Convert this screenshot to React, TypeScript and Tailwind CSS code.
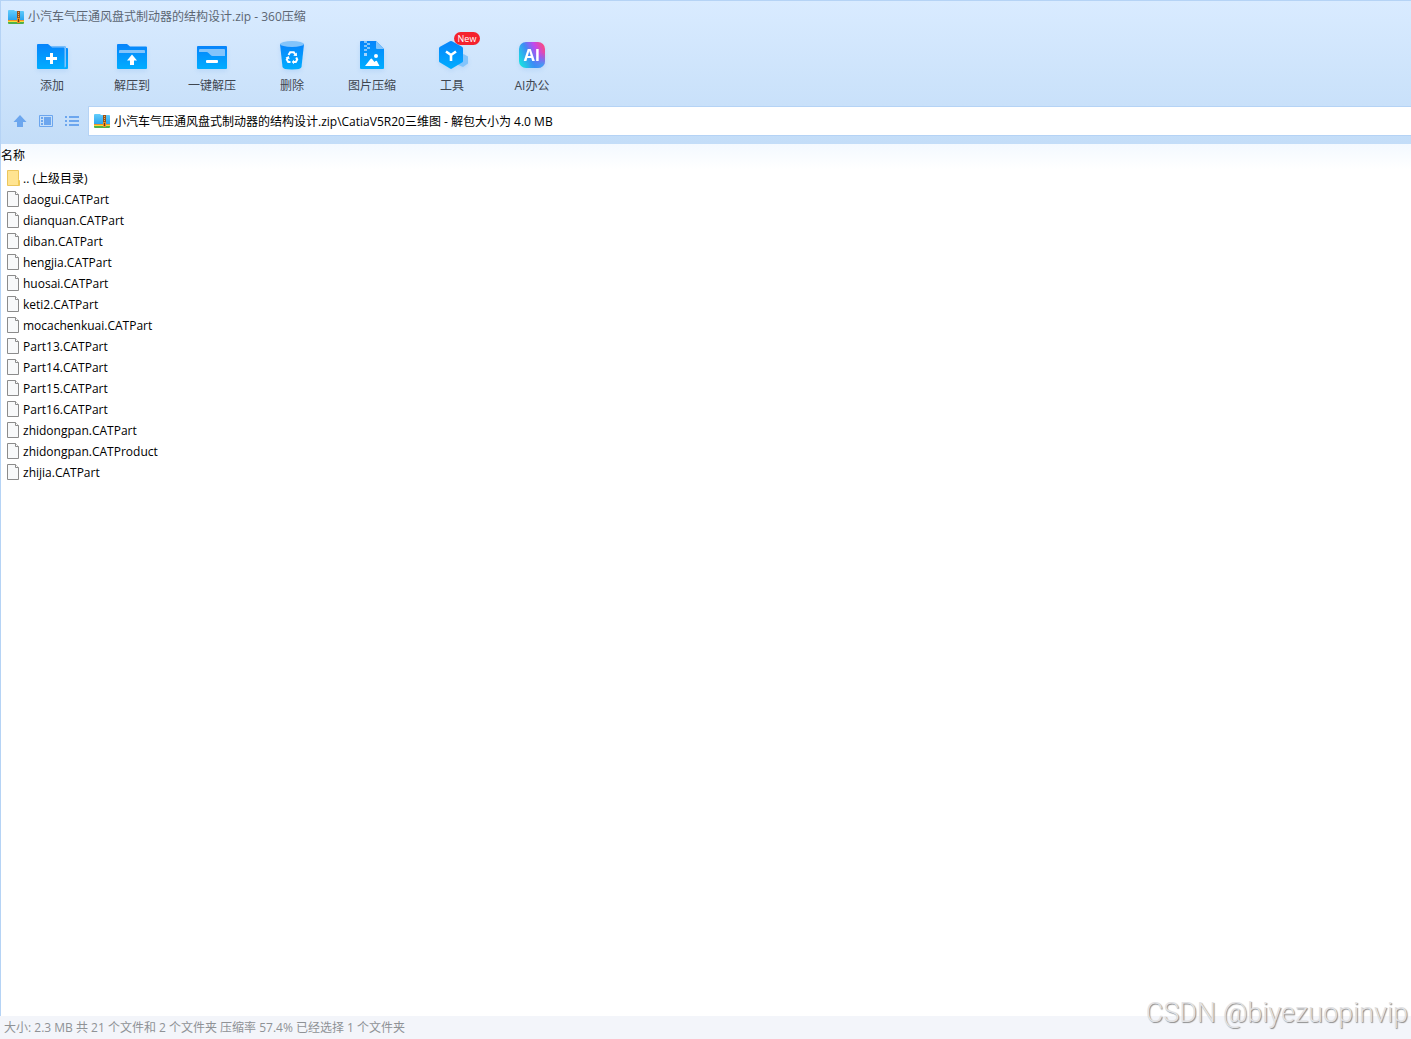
import React, { useState } from 'react';

interface Tool {
    label: string;
    icon: React.ReactNode;
    isNew?: boolean;
}

const ArchiveIcon: React.FC = () => (
    <svg width="16" height="16" viewBox="0 0 16 16" className="shrink-0" aria-hidden="true">
        <defs>
            <linearGradient id="archive" x1="0" y1="0" x2="0" y2="1">
                <stop offset="0" stopColor="#63cdfb" />
                <stop offset="1" stopColor="#2ba4ee" />
            </linearGradient>
        </defs>
        <path d="M0 2Q0 1 1 1h5l1 1h8q1 0 1 1v8H0z" fill="url(#archive)" />
        <path d="M0 11h16v1H0z" fill="#f0902a" />
        <path d="M0 12h16v1H0z" fill="#f7dc3a" />
        <path d="M0 13h16v1q0 1-1 1H1q-1 0-1-1z" fill="#4fb04a" />
        <path d="M9 2h3v12H9z" fill="#94511d" />
        <path d="M10 3h1v1h-1zm0 2h1v1h-1zm0 2h1v1h-1z" fill="#f3b04b" />
        <path d="M9 9h3v5H9z" fill="#e88b20" />
        <path d="M10 10h1v3h-1z" fill="#6e3a12" />
    </svg>
);

const Blue: React.FC<{ id: string }> = ({ id }) => (
    <defs>
        <linearGradient id={id} x1="0" y1="0" x2="0" y2="1">
            <stop offset="0" stopColor="#0784fb" />
            <stop offset="1" stopColor="#00adff" />
        </linearGradient>
    </defs>
);

const svgProps = { width: 40, height: 40, viewBox: '0 0 40 40', 'aria-hidden': true, className: 'drop-shadow-[0_2px_2px_rgba(60,140,230,0.15)]' };

const AddIcon = () => (
    <svg {...svgProps}>
        <Blue id="add" />
        <path d="M5 10q0-1 1-1h10l3 2.500h14q1 0 1 1V13h1q1 0 1 1v19q0 1-1 1H6q-1 0-1-1z" fill="url(#add)" />
        <path d="M19 11.500h13.500q1.500 0 1.500 1.500v18q0 1.500-1.500 1.500v-19q0-1-1-1H20z" fill="#83c4fb" />
        <path d="M18 18h3v4h4v3h-4v4h-3v-4h-4v-3h4z" fill="#fff" />
    </svg>
);

const ExtractIcon = () => (
    <svg {...svgProps}>
        <Blue id="extract" />
        <path d="M5 10q0-1 1-1h9l3 2.500h16q1 0 1 1V33q0 1-1 1H6q-1 0-1-1z" fill="url(#extract)" />
        <path d="M7 18v-2q0-1 1-1h24q1 0 1 1v2z" fill="#83c4fb" />
        <path d="M20 19.500l5 6h-3V30h-4v-4.500h-3z" fill="#fff" />
    </svg>
);

const QuickExtractIcon = () => (
    <svg {...svgProps}>
        <Blue id="quick" />
        <path d="M5 12q0-1 1-1h28q1 0 1 1v21q0 1-1 1H6q-1 0-1-1z" fill="url(#quick)" />
        <path d="M7 15q0-1 1-1h24q1 0 1 1v6H20.500q-1 0-2-1l-2-2q-1-1-2-1H7z" fill="#83c4fb" />
        <rect x="14" y="25" width="12" height="3" rx="1" fill="#fff" />
    </svg>
);

const DeleteIcon = () => (
    <svg {...svgProps}>
        <Blue id="delete" />
        <path d="M8 9h24l-2.500 23q-.3 2.500-9.500 2.500T10.500 32z" fill="url(#delete)" />
        <ellipse cx="20" cy="9" rx="12" ry="3" fill="#83c4fb" />
        <g fill="none" stroke="#fff" strokeWidth="2">
            <path d="M16.500 20l1.700-2.700h3.600l1.400 2.200" />
            <path d="M24.200 22.500l1 2-1.400 2.500h-2.300" />
            <path d="M18.500 27h-2.300l-1.400-2.500 1-1.800" />
        </g>
        <path d="M21.200 20.800l3.800.2-.2-3.600zM22 24.800v4.400L19.700 27zM13.500 22.700l3.200-1.600 1 3.200z" fill="#fff" />
    </svg>
);

const ImageIcon = () => (
    <svg {...svgProps}>
        <Blue id="image" />
        <path d="M8 7q0-1 1-1h15l8 8v19q0 1-1 1H9q-1 0-1-1z" fill="url(#image)" />
        <path d="M24 6l8 8h-7q-1 0-1-1z" fill="#83c4fb" />
        <path d="M12 6h3v2h3v2h-3v2h3v2h-3v2h-3v-2h3v-2h-3v-2h3V8h-3z" fill="#83c4fb" />
        <path d="M12 18h3v3h-3z" fill="#a5d5fd" />
        <circle cx="24" cy="21" r="2" fill="#fff" />
        <path d="M13 31l5.500-7q.8-1 1.600 0l2.400 3 1-1q.7-.7 1.400 0l2.600 5z" fill="#fff" />
    </svg>
);

const ToolsIcon = () => (
    <svg {...svgProps}>
        <Blue id="tools" />
        <path d="M31.500 19l4.500 2.500v7L31 32l-6-2.500z" fill="#83c4fb" />
        <path d="M18 6.300q1-.6 2 0l10 5.500q1 .6 1 1.700v12.500q0 1-1 1.600l-10 6q-1 .6-2 0l-10-6q-1-.6-1-1.600V13.500q0-1.100 1-1.700z" fill="url(#tools)" />
        <path d="M14 16.500l5 3.500 5-3.500M19 20v6" fill="none" stroke="#fff" strokeWidth="2.600" />
    </svg>
);

const AiIcon = () => (
    <svg {...svgProps}>
        <defs>
            <linearGradient id="ai" x1="0" y1=".7" x2="1" y2=".2">
                <stop offset="0" stopColor="#19dce2" />
                <stop offset=".4" stopColor="#3f8bf5" />
                <stop offset=".7" stopColor="#c049ee" />
                <stop offset="1" stopColor="#fb4a7d" />
            </linearGradient>
            <radialGradient id="aiGlow" cx=".95" cy="1" r=".6">
                <stop offset="0" stopColor="#22b8f4" />
                <stop offset="1" stopColor="#3f7cf5" stopOpacity="0" />
            </radialGradient>
        </defs>
        <rect x="7" y="7" width="26" height="26" rx="7" fill="url(#ai)" />
        <rect x="7" y="7" width="26" height="26" rx="7" fill="url(#aiGlow)" />
        <text x="20" y="26" textAnchor="middle" fill="#fff" fontSize="16" fontWeight="700" fontFamily="Open Sans, sans-serif">AI</text>
    </svg>
);

const FolderIcon = () => (
    <svg width="14" height="18" viewBox="0 0 14 18" className="shrink-0" aria-hidden="true">
        <path d="M1.500 1.500h11v9l1 1v5h-12z" fill="#ffe491" stroke="#ecc65c" />
        <path d="M12.500 10.500v6" stroke="#f3cc55" />
    </svg>
);

const FileIcon = () => (
    <svg width="14" height="18" viewBox="0 0 14 18" className="shrink-0" aria-hidden="true">
        <path d="M1.500 1.500h8l3 3v12h-11z" fill="#f8f9fa" stroke="#8b8b8b" />
        <path d="M9.500 1.500v3h3" fill="#fff" stroke="#8b8b8b" />
    </svg>
);

const tools: Tool[] = [
    { label: '添加', icon: <AddIcon /> },
    { label: '解压到', icon: <ExtractIcon /> },
    { label: '一键解压', icon: <QuickExtractIcon /> },
    { label: '删除', icon: <DeleteIcon /> },
    { label: '图片压缩', icon: <ImageIcon /> },
    { label: '工具', icon: <ToolsIcon />, isNew: true },
    { label: 'AI办公', icon: <AiIcon /> },
];

const files = [
    'daogui.CATPart',
    'dianquan.CATPart',
    'diban.CATPart',
    'hengjia.CATPart',
    'huosai.CATPart',
    'keti2.CATPart',
    'mocachenkuai.CATPart',
    'Part13.CATPart',
    'Part14.CATPart',
    'Part15.CATPart',
    'Part16.CATPart',
    'zhidongpan.CATPart',
    'zhidongpan.CATProduct',
    'zhijia.CATPart',
];

const FileRow: React.FC<{ name: string; icon: React.ReactNode }> = ({ name, icon }) => (
    <tr>
        <td className="p-0">
            <div className="flex h-[21px] items-start gap-[3px] pl-[5px]">
                {icon}
                <span className="pt-[2px]">{name}</span>
            </div>
        </td>
    </tr>
);

const App: React.FC = () => {
    const [path, setPath] = useState('小汽车气压通风盘式制动器的结构设计.zip\\CatiaV5R20三维图 - 解包大小为 4.0 MB');

    return (
        <div className="relative flex min-h-screen flex-col bg-white font-['Open_Sans','Noto_Sans_CJK_SC',sans-serif] text-[12px] leading-4 text-black">
            <header className="border-t border-l border-[#b5d3f5] bg-linear-to-b from-[#d9ebff] to-[#c3ddf8]">
                <div className="flex h-[31px] items-center gap-1 pl-[7px] text-[#5c6673]">
                    <ArchiveIcon />
                    <h1>小汽车气压通风盘式制动器的结构设计.zip - 360压缩</h1>
                </div>
                <nav className="flex h-[68px] pl-[11px]">
                    {tools.map((tool) => (
                        <button key={tool.label} type="button" className="relative flex w-20 flex-col items-center gap-[3px] pt-[3px] text-[#3f4650]">
                            {tool.icon}
                            <span>{tool.label}</span>
                            {tool.isNew && (
                                <span className="absolute top-0 left-[42px] h-[13px] w-[26px] rounded-full bg-[#f5222d] text-center text-[9px] leading-[13px] text-white">New</span>
                            )}
                        </button>
                    ))}
                </nav>
                <div className="flex items-center pt-[6px] pb-2">
                    <div className="flex w-[87px] gap-[10px] pl-[11px]">
                        <button type="button" aria-label="向上">
                            <svg width="16" height="16" viewBox="0 0 16 16">
                                <path d="M8 2l6.500 7H11v5H5V9H1.500z" fill="#6ca6ee" />
                            </svg>
                        </button>
                        <button type="button" aria-label="预览">
                            <svg width="16" height="16" viewBox="0 0 16 16">
                                <path d="M1.500 2.500h13v11h-13z" fill="none" stroke="#6ca6ee" />
                                <path d="M6 4h7v8H6zM3 4h2v2H3zm0 3h2v2H3zM3 10h2v2H3z" fill="#6ca6ee" />
                            </svg>
                        </button>
                        <button type="button" aria-label="列表">
                            <svg width="16" height="16" viewBox="0 0 16 16">
                                <path d="M1 3h2v2H1zm4 0h10v2H5zM1 7h2v2H1zm4 0h10v2H5zm-4 4h2v2H1zm4 0h10v2H5z" fill="#6ca6ee" />
                            </svg>
                        </button>
                    </div>
                    <label className="flex h-[30px] flex-1 items-center gap-1 border-y border-l border-[#b5d3f5] bg-white pl-[5px]">
                        <ArchiveIcon />
                        <input aria-label="路径" value={path} onChange={(e) => setPath(e.target.value)} className="h-5 flex-1 outline-none" />
                    </label>
                </div>
            </header>

            <main className="flex-1 border-l border-[#b5d3f5]">
                <table className="w-full border-collapse text-left">
                    <thead>
                        <tr className="h-[25px] bg-linear-to-b from-[#f3f9ff] to-white">
                            <th className="p-0 pb-[2px] font-normal">名称</th>
                        </tr>
                    </thead>
                    <tbody>
                        <FileRow name=".. (上级目录)" icon={<FolderIcon />} />
                        {files.map((name) => (
                            <FileRow key={name} name={name} icon={<FileIcon />} />
                        ))}
                    </tbody>
                </table>
            </main>

            <footer className="flex h-[23px] items-center bg-[#f3f5fa] pl-1 text-[#8f9296]">
                大小: 2.3 MB 共 21 个文件和 2 个文件夹 压缩率 57.4% 已经选择 1 个文件夹
            </footer>

            <div className="absolute right-[3px] bottom-[10px] font-[Roboto,sans-serif] text-[27px] leading-8 font-light text-[#e2e2e4] [text-shadow:1px_1px_1px_#8a8a8a]">
                CSDN @biyezuopinvip
            </div>
        </div>
    );
};

export default App;
